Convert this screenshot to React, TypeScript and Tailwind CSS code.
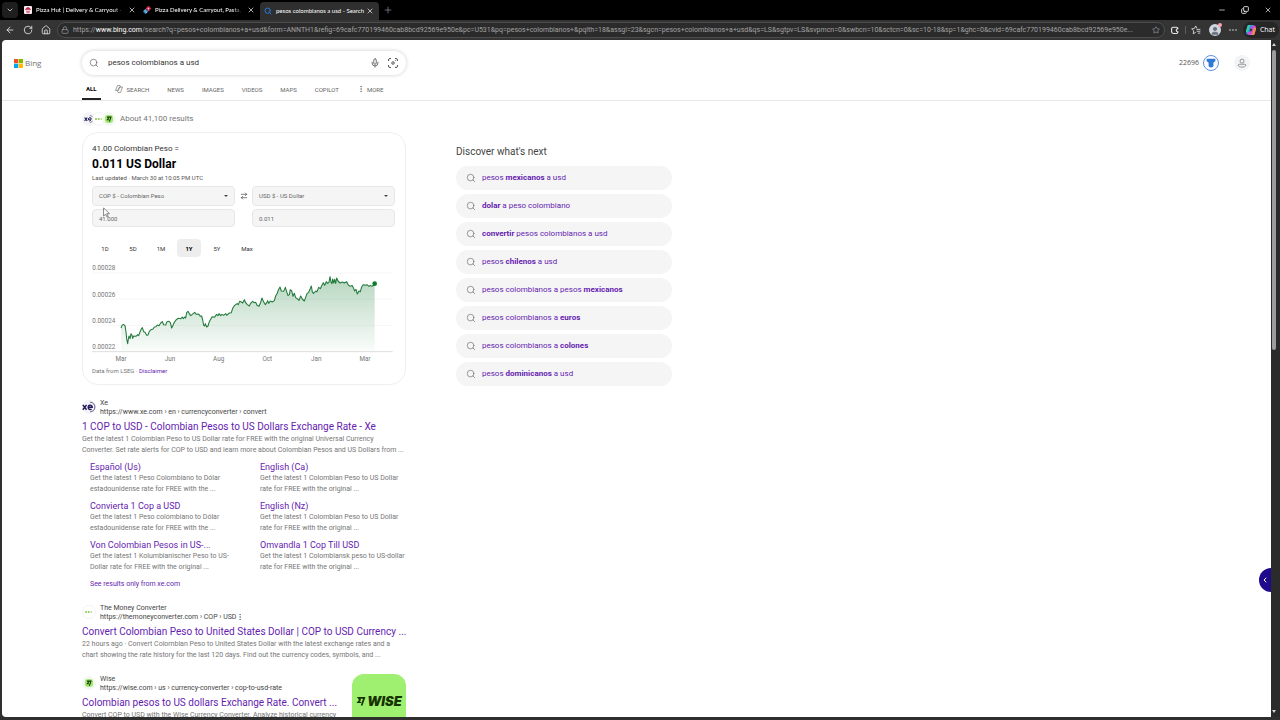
import React, { useState } from "react";
import { ArrowLeft, ArrowRightLeft, ChevronDown, ChevronLeft, Copy, EllipsisVertical, House, Lock, Mic, Minus, Plus, RotateCw, Search, Star, User, X } from "lucide-react";

const browserTabs = [
  { id: 1, title: "Pizza Hut | Delivery & Carryout - N", active: false },
  { id: 2, title: "Pizza Delivery & Carryout, Pasta, W", active: false },
  { id: 3, title: "pesos colombianos a usd - Search", active: true },
];

const urlRest =
  "/search?q=pesos+colombianos+a+usd&form=ANNTH1&refig=69cafc770199460cab8bcd92569e950e&pc=U531&pq=pesos+colombianos+&pqlth=18&assgl=23&sgcn=pesos+colombianos+a+usd&qs=LS&sgtpv=LS&svpmcn=0&swbcn=10&sctcn=0&sc=10-18&sp=1&ghc=0&cvid=69cafc770199460cab8bcd92569e950e...";

const scopes = ["ALL", "SEARCH", "NEWS", "IMAGES", "VIDEOS", "MAPS", "COPILOT", "MORE"];

const ranges = ["1D", "5D", "1M", "1Y", "5Y", "Max"];

const yLabels = [
  { label: "0.00028", y: 100 },
  { label: "0.00026", y: 179 },
  { label: "0.00024", y: 258 },
  { label: "0.00022", y: 337 },
];

const xLabels = [
  { label: "Mar", x: 153 },
  { label: "Jun", x: 300 },
  { label: "Aug", x: 446 },
  { label: "Oct", x: 592 },
  { label: "Jan", x: 739 },
  { label: "Mar", x: 885 },
];

const line =
  "153,279 156,271 160,268 165,272 168,291 170,312 173,326 175,312 177,303 180,311 183,296 186,301 188,310 191,303 198,304 203,299 206,302 210,291 214,282 217,278 221,290 225,292 230,301 234,300 238,289 243,284 249,282 253,276 258,275 262,270 267,272 272,264 277,260 281,269 287,270 291,260 297,259 301,263 305,279 309,271 313,262 318,255 324,250 333,251 337,246 340,251 344,246 347,249 350,233 354,229 358,236 362,242 367,238 374,232 379,238 386,237 391,244 395,243 398,255 401,271 404,273 406,266 410,276 414,273 418,260 423,251 427,245 433,247 440,238 444,242 447,236 452,242 456,238 461,241 467,236 470,241 478,234 484,233 488,220 493,212 498,208 502,206 505,209 509,199 514,201 518,204 523,194 527,203 532,209 538,213 542,205 548,199 552,203 557,202 561,211 567,214 571,205 576,189 580,199 586,209 590,203 593,197 596,205 601,198 607,201 613,197 617,183 622,174 625,165 630,156 634,168 641,169 646,157 650,170 654,182 658,179 661,164 665,167 669,184 673,175 677,188 683,192 687,196 692,183 697,192 703,198 707,187 711,176 716,172 720,163 724,153 727,171 731,175 737,168 741,170 746,157 751,161 755,152 760,143 764,151 769,140 773,145 777,142 780,125 783,141 786,146 788,132 791,144 794,133 797,145 800,129 804,138 810,144 817,141 823,144 830,140 835,150 841,154 846,151 850,158 854,168 858,163 862,177 867,168 871,170 875,156 880,149 886,151 891,149 897,154 901,151 906,154 910,151 914,146";

const siteLinks = [
  { title: "Español (Us)", lines: ["Get the latest 1 Peso Colombiano to Dólar", "estadounidense rate for FREE with the ..."] },
  { title: "English (Ca)", lines: ["Get the latest 1 Colombian Peso to US Dollar", "rate for FREE with the original ..."] },
  { title: "Convierta 1 Cop a USD", lines: ["Get the latest 1 Peso colombiano to Dólar", "estadounidense rate for FREE with the ..."] },
  { title: "English (Nz)", lines: ["Get the latest 1 Colombian Peso to US Dollar", "rate for FREE with the original ..."] },
  { title: "Von Colombian Pesos in US-...", lines: ["Get the latest 1 Kolumbianischer Peso to US-", "Dollar rate for FREE with the original ..."] },
  { title: "Omvandla 1 Cop Till USD", lines: ["Get the latest 1 Colombiansk peso to US-dollar", "rate for FREE with the original ..."] },
];

const suggestions = [
  { before: "pesos ", bold: "mexicanos", after: " a usd" },
  { before: "", bold: "dolar", after: " a peso colombiano" },
  { before: "", bold: "convertir", after: " pesos colombianos a usd" },
  { before: "pesos ", bold: "chilenos", after: " a usd" },
  { before: "pesos colombianos a pesos ", bold: "mexicanos", after: "" },
  { before: "pesos colombianos a ", bold: "euros", after: "" },
  { before: "pesos colombianos a ", bold: "colones", after: "" },
  { before: "pesos ", bold: "dominicanos", after: " a usd" },
];

const PizzaHutIcon = () => (
  <svg viewBox="0 0 16 16" className="w-2 h-2 shrink-0">
    <rect width="16" height="16" rx="2" fill="#f7eef0" />
    <path d="M2 8c1-3 3-5 6-6 3 1 5 3 6 6-4-1-8-1-12 0z" fill="#c8214a" />
    <path d="M4 10.500h8M5 13.500h6" stroke="#c8214a" strokeWidth="1.500" />
  </svg>
);

const DominosIcon = () => (
  <svg viewBox="0 0 16 16" className="w-2 h-2 shrink-0">
    <g transform="rotate(45 8 8)">
      <rect x="4" y="0" width="8" height="8" rx="1.500" fill="#e0304f" />
      <rect x="4" y="8" width="8" height="8" rx="1.500" fill="#2a7fb8" />
      <circle cx="8" cy="4" r="1.300" fill="#fff" />
      <circle cx="6.500" cy="12" r="1.200" fill="#fff" />
      <circle cx="9.800" cy="12" r="1.200" fill="#fff" />
    </g>
  </svg>
);

const CopilotIcon = () => (
  <svg viewBox="0 0 24 24" className="w-3 h-3 shrink-0">
    <path d="M8 2h7c2 0 3 1 3.500 3l1 3h-5l-3 10c-.5 2-1.500 3-3.500 3H5c-2 0-3-1.500-2.500-4L5 5c.5-2 1.500-3 3-3z" fill="#2b8fef" />
    <path d="M8 2h5c-2 0-3 2-3.500 4L6 17H4c-2 0-2.500-2-2-4L4.500 5C5 3 6 2 8 2z" fill="#35c9a5" />
    <path d="M16 22H9c-2 0-3-1-3.500-3l-1-3h5l3-10c.5-2 1.500-3 3.500-3h3c2 0 3 1.500 2.500 4L19 19c-.5 2-1.500 3-3 3z" fill="#c94fd8" />
    <path d="M16 22h-5c2 0 3-2 3.500-4L18 7h2c2 0 2.500 2 2 4l-2.500 8c-.5 2-1.500 3-3.500 3z" fill="#f58a4b" />
    <path d="M10.500 9.500h4l-1.500 5H9z" fill="#333" />
  </svg>
);

const XeIcon = ({ className }: { className: string }) => (
  <span className={`flex items-center justify-center rounded-full bg-[#f4f4f7] shrink-0 ${className}`}>
    <svg viewBox="0 0 26 26" className="w-full h-full">
      <path d="M15 4a9 9 0 0 1 0 18" fill="none" stroke="#4a4478" strokeWidth="1.600" />
      <path d="M1.500 9l7 9M8.500 9l-7 9" stroke="#221a5c" strokeWidth="2.800" />
      <path d="M11.500 13.500h7.500a3.800 4 0 1 0-1.200 3" fill="none" stroke="#221a5c" strokeWidth="2.600" />
    </svg>
  </span>
);

const MoneyConverterIcon = ({ className }: { className: string }) => (
  <span className={`flex items-center justify-center rounded-full bg-white border border-gray-100 shrink-0 ${className}`}>
    <svg viewBox="0 0 24 8" className="w-2 h-1">
      <circle cx="3" cy="4" r="3" fill="#8bc34a" />
      <circle cx="11" cy="4" r="3" fill="#8bc34a" />
      <circle cx="19" cy="4" r="3" fill="#b9d89a" />
    </svg>
  </span>
);

// fast flag mark used by Wise
const FlagMark = ({ className }: { className: string }) => (
  <svg viewBox="0 0 20 20" className={className}>
    <path d="M2 2h17l-6 17h-3.500l4.500-13.500H8.500L10 8l-3 3.500h4l-1 2.500H1l5-6z" fill="#163300" />
  </svg>
);

const WiseIcon = ({ className }: { className: string }) => (
  <span className={`flex items-center justify-center rounded-full bg-[#f4f8f2] shrink-0 ${className}`}>
    <span className="flex items-center justify-center w-2 h-2 rounded-[3px] bg-[#9fe870]">
      <FlagMark className="w-[6px] h-[6px]" />
    </span>
  </span>
);

const BrowserChrome = () => {
  return (
    <div className="shrink-0 font-['Open_Sans',sans-serif]">
      <div className="flex items-center h-5 bg-black text-white">
        <button aria-label="Tab search" className="flex items-center justify-center w-4 h-4 ml-[2px] mr-1 rounded bg-[#1e1e1e]">
          <ChevronDown className="w-2 h-2" />
        </button>
        {browserTabs.map((tab) => (
          <div key={tab.id} className={`flex items-center w-[119px] pl-[2px] pr-[5px] gap-1 ${tab.active ? "h-[18px] self-end rounded-t bg-[#2f2f2f]" : "h-4"}`}>
            {tab.id === 1 && <PizzaHutIcon />}
            {tab.id === 2 && <DominosIcon />}
            {tab.id === 3 && <Search className="w-2 h-2 ml-[2px] shrink-0 text-[#2878d8]" strokeWidth={3} />}
            <span className={`flex-1 min-w-0 whitespace-nowrap font-[Lato,sans-serif] text-[6px] leading-3 ${tab.active ? "" : "[mask-image:linear-gradient(to_right,black_88%,transparent)]"}`}>{tab.title}</span>
            <button aria-label="Close tab" className="shrink-0">
              <X className="w-2 h-2" strokeWidth={2} />
            </button>
          </div>
        ))}
        <button aria-label="New tab" className="ml-1 text-gray-400">
          <Plus className="w-2.5 h-2.5" strokeWidth={1.5} />
        </button>
        <div className="flex items-center gap-[15px] ml-auto mr-2">
          <button aria-label="Minimize"><Minus className="w-2 h-2" /></button>
          <button aria-label="Restore"><Copy className="w-2 h-2 -scale-x-100 rotate-180" strokeWidth={2.5} /></button>
          <button aria-label="Close"><X className="w-2 h-2" /></button>
        </div>
      </div>

      <div className="flex items-center h-5 pl-[5px] pr-px gap-2 bg-[#343434] text-gray-200">
        <button aria-label="Back"><ArrowLeft className="w-2.5 h-2.5" /></button>
        <button aria-label="Refresh"><RotateCw className="w-2.5 h-2.5" /></button>
        <button aria-label="Home"><House className="w-2.5 h-2.5" /></button>
        <div className="flex flex-1 items-center min-w-0 gap-[5px] -ml-[2px]">
          <div className="flex flex-1 items-center min-w-0 h-4 pl-[3px] pr-1 gap-1 rounded-full border border-[#4c4c4c] bg-[#2b2b2b]">
            <Lock className="w-2 h-2 shrink-0 text-gray-400" />
            <div className="relative flex-1 min-w-0 font-[Roboto,sans-serif] text-[7px] leading-3 text-[#a3a3a3]">
              <div className="overflow-hidden text-ellipsis whitespace-nowrap">
                https://<span className="text-white">www.bing.com</span>{urlRest}
              </div>
              <input aria-label="Address" className="absolute inset-0 w-full bg-transparent outline-none" />
            </div>
            <button aria-label="Add to favorites"><Star className="w-2 h-2 text-gray-400" /></button>
          </div>
          <button aria-label="Extensions">
            <svg viewBox="0 0 16 16" className="w-2.5 h-2.5" fill="none" stroke="currentColor" strokeWidth="1.800">
              <path d="M12.500 6V5.500a2 2 0 0 0-2-2H5.500a3 3 0 0 0-3 3v4a3 3 0 0 0 3 3h5a2 2 0 0 0 2-2V11a2.500 2.500 0 1 1 0-5z" />
            </svg>
          </button>
          <span className="w-px h-2 bg-[#5c5c5c]" />
          <button aria-label="Favorites">
            <svg viewBox="0 0 16 16" className="w-2.5 h-2.5" fill="none" stroke="currentColor" strokeWidth="1.300">
              <path d="M9.500 5.500L7.500 1.500 5.500 5.500 1 6.200l3.300 3.200-.8 4.600 4-2.200M9 7h6M9 10h6M11 13h4" />
            </svg>
          </button>
        </div>
        <button aria-label="Profile" className="relative flex items-end justify-center w-3 h-3 rounded-full bg-gray-300 text-gray-500">
          <User className="w-2.5 h-2.5" fill="currentColor" />
          <span className="absolute -top-px -right-px w-1 h-1 rounded-full bg-rose-300" />
        </button>
        <button aria-label="Settings and more">
          <svg viewBox="0 0 16 4" className="w-2 h-1" fill="currentColor">
            <circle cx="2" cy="2" r="1.500" /><circle cx="8" cy="2" r="1.500" /><circle cx="14" cy="2" r="1.500" />
          </svg>
        </button>
        <button className="flex items-center h-4 pl-[2px] pr-1 -ml-[2px] gap-[3px] rounded-full bg-[#262626] text-[7px] leading-3 text-white">
          <CopilotIcon />
          Chat
        </button>
      </div>
    </div>
  );
};

const SearchHeader = () => {
  return (
    <header className="pt-[11px] border-b border-gray-200">
      <div className="flex items-center pl-3 pr-[21px]">
        <a href="#" className="flex items-center w-[68px] gap-[2px] text-[8px] leading-3 text-[#737373]">
          <svg viewBox="0 0 19 19" className="w-[9px] h-[9px]">
            <path d="M0 0h9v9H0z" fill="#f25022" />
            <path d="M10 0h9v9h-9z" fill="#7fba00" />
            <path d="M0 10h9v9H0z" fill="#00a4ef" />
            <path d="M10 10h9v9h-9z" fill="#ffb900" />
          </svg>
          <span className="font-['Open_Sans',sans-serif]">Bing</span>
        </a>
        <form className="flex items-center w-full max-w-[324px] h-6 px-[7px] gap-[9px] rounded-full bg-white shadow-[0_0_4px_rgba(0,0,0,0.2)]">
          <Search className="w-2.5 h-2.5 shrink-0 text-[#666]" strokeWidth={1.7} />
          <input aria-label="Search" defaultValue="pesos colombianos a usd" className="flex-1 min-w-0 text-[8px] leading-3 text-[#333] outline-none" />
          <div className="flex items-center gap-[7px]">
            <button type="button" aria-label="Search using voice"><Mic className="w-2.5 h-2.5 text-[#555]" /></button>
            <button type="button" aria-label="Search using an image">
              <svg viewBox="0 0 24 24" className="w-3 h-3 text-[#555]" fill="none" stroke="currentColor" strokeWidth="2">
                <path d="M3 8V6a3 3 0 0 1 3-3h2M16 3h2a3 3 0 0 1 3 3v2M21 16v2a3 3 0 0 1-3 3h-2M8 21H6a3 3 0 0 1-3-3v-2" />
                <circle cx="12" cy="12" r="2.500" />
                <circle cx="17" cy="7" r=".4" />
              </svg>
            </button>
          </div>
        </form>
        <div className="flex items-center ml-auto gap-1 text-[7px] leading-3 text-[#555]">
          <span className="font-['Open_Sans',sans-serif]">22696</span>
          <button aria-label="Microsoft Rewards" className="flex items-center justify-center w-4 h-4 rounded-full border border-[#5a92e0]">
            <svg viewBox="0 0 16 16" className="w-2.5 h-2.5" fill="#2f78d8">
              <path d="M1 1h14v4l-3 2v2H4V7L1 5z" />
              <circle cx="8" cy="11" r="4" />
            </svg>
          </button>
          <button aria-label="Account" className="flex items-center justify-center w-4 h-4 ml-[11px] rounded-full bg-gray-100">
            <svg viewBox="0 0 16 16" className="w-2.5 h-2.5" fill="none" stroke="#777" strokeWidth="1.200">
              <circle cx="8" cy="5" r="3.200" />
              <path d="M2 11.500c0-1 .7-1.500 1.500-1.500h9c.8 0 1.500.5 1.500 1.500 0 2-2.500 3-6 3s-6-1-6-3z" />
            </svg>
          </button>
        </div>
      </div>
      <nav className="flex items-stretch h-[22px] mt-[3px] pl-20 gap-[18px] text-[6px] text-[#666]">
        {scopes.map((scope) => (
          <a key={scope} href="#" className={`flex items-center gap-[2px] ${scope === "ALL" ? "px-1 -mr-1 font-bold text-black border-b-2 border-[#222]" : ""}`}>
            {scope === "SEARCH" && (
              <svg viewBox="0 0 16 16" className="w-2 h-2 mr-[2px]" fill="none" stroke="currentColor" strokeWidth="1.200">
                <path d="M5 1h5l1.500 4M11 15H6l-1.500-4M5 1L1 11h4l4-7h6l-4 11M9 4L7 12" />
              </svg>
            )}
            {scope === "MORE" && <EllipsisVertical className="w-2 h-2" />}
            {scope}
          </a>
        ))}
      </nav>
    </header>
  );
};

const RateChart = () => {
  return (
    <svg viewBox="66 81 912 306" className="w-full h-auto mt-[5px]" role="img" aria-label="COP to USD, last year">
      <defs>
        <linearGradient id="area" x1="0" y1="0" x2="0" y2="1">
          <stop offset="0" stopColor="#1a7f37" stopOpacity="0.32" />
          <stop offset="1" stopColor="#1a7f37" stopOpacity="0.02" />
        </linearGradient>
      </defs>
      {[114, 192, 271].map((y) => (
        <path key={y} d={`M66 ${y}H968`} stroke="#f6f6f6" strokeWidth="3" />
      ))}
      <polygon points={`153,348 ${line} 914,348`} fill="url(#area)" />
      <path d="M66 350H968" stroke="#dedede" strokeWidth="3" />
      <polyline points={line} fill="none" stroke="#237a3b" strokeWidth="3.200" strokeLinejoin="round" />
      <circle cx="914" cy="146" r="7" fill="#0f7b2c" />
      {yLabels.map(({ label, y }) => (
        <text key={label} x="67" y={y + 6} fontSize="19" fill="#767676">{label}</text>
      ))}
      {xLabels.map(({ label, x }) => (
        <text key={x} x={x} y="377" fontSize="19" fill="#767676" textAnchor="middle">{label}</text>
      ))}
    </svg>
  );
};

const CurrencyCard = () => {
  const [range, setRange] = useState("1Y");
  const fieldStyle = "w-full appearance-none rounded-[4px] border border-gray-200 bg-[#f5f5f5] px-[6px] text-[6px] leading-3 text-[#666]";

  return (
    <section className="mt-[5px] px-[9px] pt-[10px] pb-2 rounded-2xl border border-gray-200/70">
      <p className="text-[8px] leading-3 text-[#333]">41.00 Colombian Peso =</p>
      <h2 className="text-[12px] leading-[19px] font-bold text-black">0.011 US Dollar</h2>
      <p className="text-[6px] leading-2 text-[#555]">Last updated · March 30 at 10:05 PM UTC</p>

      <div className="flex items-center justify-between mt-1">
        <div className="relative w-[143px]">
          <select aria-label="From currency" className={`${fieldStyle} block h-5`}>
            <option>COP $ - Colombian Peso</option>
          </select>
          <span className="absolute right-[7px] top-2 border-x-2 border-t-2 border-x-transparent border-t-[#444] mt-px pointer-events-none" />
        </div>
        <button aria-label="Swap currencies"><ArrowRightLeft className="w-2 h-2 text-[#444]" /></button>
        <div className="relative w-[143px] mr-px">
          <select aria-label="To currency" className={`${fieldStyle} block h-5`}>
            <option>USD $ - US Dollar</option>
          </select>
          <span className="absolute right-[7px] top-2 border-x-2 border-t-2 border-x-transparent border-t-[#444] mt-px pointer-events-none" />
        </div>
      </div>
      <div className="relative flex justify-between mt-[3px]">
        <div className="w-[143px]">
          <input aria-label="From amount" defaultValue="41.000" className={`${fieldStyle} block h-[18px]`} />
        </div>
        <div className="w-[143px] mr-px">
          <input aria-label="To amount" defaultValue="0.011" className={`${fieldStyle} block h-[18px]`} />
        </div>
        <svg viewBox="0 0 12 18" className="absolute left-[11px] -top-[2px] w-[7px] h-[11px] pointer-events-none">
          <path d="M1 1v14l3.500-3 2.500 5 2-1-2.500-5H11z" fill="#fff" stroke="#555" strokeWidth="1.200" />
        </svg>
      </div>

      <div className="flex mt-3 pl-px gap-1 text-[6px] text-[#333]">
        {ranges.map((item) => (
          <button
            key={item}
            onClick={() => setRange(item)}
            className={`h-[18px] rounded-[4px] ${item === "Max" ? "w-7" : "w-6"} ${range === item ? "bg-[#ededed] font-bold text-black" : ""}`}
          >
            {item}
          </button>
        ))}
      </div>

      <RateChart />
      <p className="mt-[2px] text-[6px] leading-[10px] text-[#767676]">
        Data from LSEG · <a href="#" className="text-[#651cb0]">Disclaimer</a>
      </p>
    </section>
  );
};

const SiteInfo = ({ icon, name, url, menu }: { icon: React.ReactNode; name: string; url: string; menu?: boolean }) => (
  <div className="flex items-center gap-1">
    {icon}
    <div className="text-[7px] text-[#444]">
      <div className="leading-[10px]">{name}</div>
      <div className="flex items-center leading-2">
        {url}
        {menu && <EllipsisVertical className="w-2 h-2" strokeWidth={1.5} />}
      </div>
    </div>
  </div>
);

const Results = () => {
  return (
    <>
      <article className="mt-[13px]">
        <SiteInfo icon={<XeIcon className="w-[14px] h-[14px]" />} name="Xe" url="https://www.xe.com › en › currencyconverter › convert" />
        <h2 className="mt-1 text-[10px] leading-[14px] whitespace-nowrap"><a href="#" className="text-[#651cb0]">1 COP to USD - Colombian Pesos to US Dollars Exchange Rate - Xe</a></h2>
        <p className="text-[7px] leading-[11px] text-[#767676] whitespace-nowrap">
          Get the latest 1 Colombian Peso to US Dollar rate for FREE with the original Universal Currency
          <br />
          Converter. Set rate alerts for COP to USD and learn more about Colombian Pesos and US Dollars from ...
        </p>
        <div className="grid grid-cols-[146px_146px] gap-x-6 gap-y-[5px] mt-[5px] pl-2">
          {siteLinks.map(({ title, lines }) => (
            <div key={title} className="whitespace-nowrap">
              <h3 className="text-[9px] leading-3"><a href="#" className="text-[#651cb0]">{title}</a></h3>
              <p className="text-[7px] leading-[11px] text-[#767676]">
                {lines[0]}
                <br />
                {lines[1]}
              </p>
            </div>
          ))}
        </div>
        <a href="#" className="block mt-[5px] pl-2 text-[7px] leading-3 text-[#651cb0]">See results only from xe.com</a>
      </article>

      <article className="mt-[13px]">
        <SiteInfo icon={<MoneyConverterIcon className="w-[14px] h-[14px]" />} name="The Money Converter" url="https://themoneyconverter.com › COP › USD" menu />
        <h2 className="mt-1 text-[10px] leading-[14px] whitespace-nowrap"><a href="#" className="text-[#651cb0]">Convert Colombian Peso to United States Dollar | COP to USD Currency ...</a></h2>
        <p className="text-[7px] leading-[11px] text-[#767676] whitespace-nowrap">
          22 hours ago · Convert Colombian Peso to United States Dollar with the latest exchange rates and a
          <br />
          chart showing the rate history for the last 120 days. Find out the currency codes, symbols, and ...
        </p>
      </article>

      <article className="flex justify-between mt-[13px]">
        <div>
          <SiteInfo icon={<WiseIcon className="w-[14px] h-[14px]" />} name="Wise" url="https://wise.com › us › currency-converter › cop-to-usd-rate" />
          <h2 className="mt-1 text-[10px] leading-[14px] whitespace-nowrap"><a href="#" className="text-[#651cb0]">Colombian pesos to US dollars Exchange Rate. Convert ...</a></h2>
          <p className="text-[7px] leading-[11px] text-[#767676] whitespace-nowrap">Convert COP to USD with the Wise Currency Converter. Analyze historical currency</p>
        </div>
        <a href="#" aria-label="Wise" className="flex items-center justify-center gap-px w-[54px] h-[54px] shrink-0 rounded-xl bg-[#9fef70] text-[#163300]">
          <FlagMark className="w-[10px] h-[10px]" />
          <span className="font-[Inter,sans-serif] text-[13px] leading-4 font-black italic">WISE</span>
        </a>
      </article>
    </>
  );
};

const App = () => {
  return (
    <div className="flex flex-col h-screen overflow-hidden bg-[#2f2f2f] font-[Roboto,sans-serif]">
      <BrowserChrome />
      <div className="flex flex-1 min-h-0 pl-[2px] pb-[3px]">
        <div className="relative flex-1 min-w-0 overflow-hidden rounded-l-[4px] bg-white">
          <SearchHeader />
          <main className="flex gap-[50px] pl-20">
            <div className="w-full max-w-[324px] pt-[10px]">
              <div className="flex items-center h-4 gap-1 text-[8px] text-[#767676]">
                <div className="flex -space-x-1">
                  <XeIcon className="w-[14px] h-[14px] p-[2px]" />
                  <MoneyConverterIcon className="w-[14px] h-[14px]" />
                  <WiseIcon className="w-[14px] h-[14px]" />
                </div>
                About 41,100 results
              </div>
              <CurrencyCard />
              <Results />
            </div>

            <aside className="w-full max-w-[216px] pt-[45px]">
              <h2 className="text-[10px] leading-3 text-[#444]">Discover what's next</h2>
              <ul className="flex flex-col gap-1 mt-2">
                {suggestions.map(({ before, bold, after }) => (
                  <li key={before + bold}>
                    <a href="#" className="flex items-center h-6 pl-[10px] gap-[6px] rounded-full bg-[#f5f5f5] text-[8px] text-[#651cb0]">
                      <Search className="w-2.5 h-2.5 text-[#767676]" strokeWidth={1.7} />
                      <span>{before}<strong>{bold}</strong>{after}</span>
                    </a>
                  </li>
                ))}
              </ul>
            </aside>
          </main>
          <button aria-label="Open sidebar" className="absolute right-0 bottom-[125px] flex items-center justify-center w-3 h-6 rounded-l-full bg-[#1d0a8c] text-white">
            <ChevronLeft className="w-2 h-2" strokeWidth={3} />
          </button>
        </div>
        <div className="flex flex-col items-center w-[9px] pt-[3px] pb-1 pr-[3px] bg-[#2b2b2b]">
          <span className="border-x-2 border-b-[3px] border-x-transparent border-b-gray-300" />
          <span className="w-1 h-[300px] mt-1 rounded-full bg-[#9c9c9c]" />
          <span className="mt-auto border-x-2 border-t-[3px] border-x-transparent border-t-gray-300" />
        </div>
      </div>
    </div>
  );
};

export default App;
